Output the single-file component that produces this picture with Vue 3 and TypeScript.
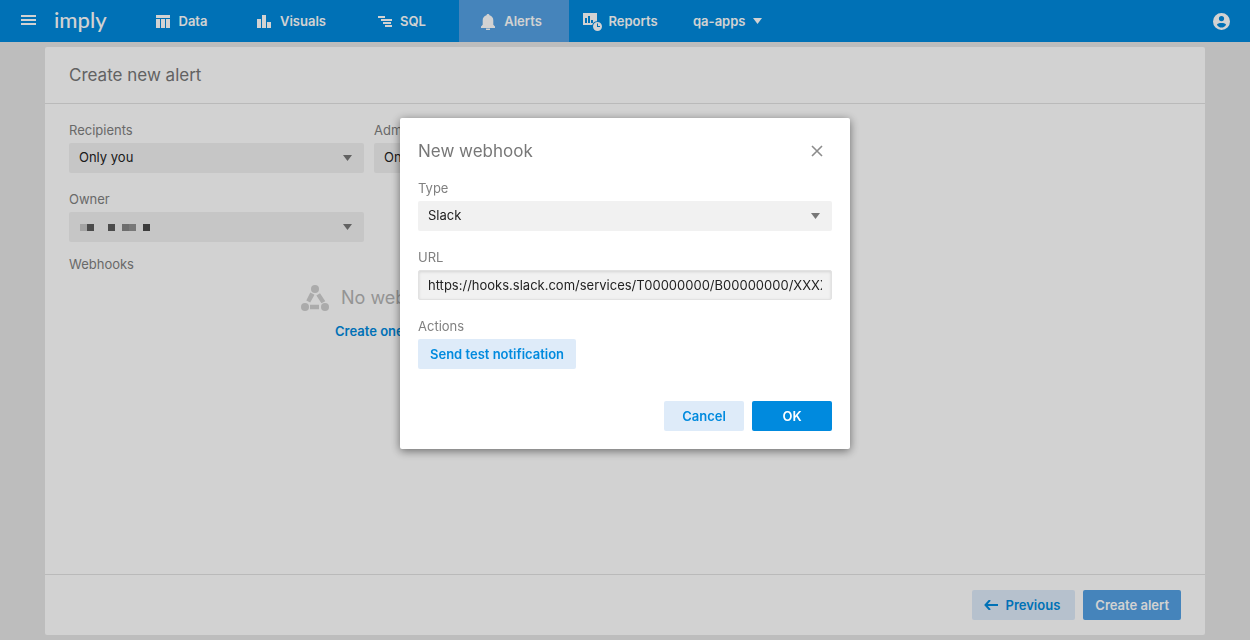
<script setup lang="ts">
import { ref } from 'vue'

interface NavItem {
  label: string
  icon: string
}

const navItems: NavItem[] = [
  { label: 'Data', icon: 'data' },
  { label: 'Visuals', icon: 'visuals' },
  { label: 'SQL', icon: 'sql' },
  { label: 'Alerts', icon: 'alerts' },
  { label: 'Reports', icon: 'reports' },
]
const active = ref('Alerts')
const dialogOpen = ref(true)
const recipients = ref('Only you')
const admins = ref('Only you')
const owner = ref('')
const hookType = ref('Slack')
const url = ref('https://hooks.slack.com/services/T00000000/B00000000/XXXXXXXXXXXXXXXXXXXXXXXX')
</script>

<template>
  <div class="page">
    <header class="topbar">
      <button class="menu" type="button" aria-label="Menu">
        <svg width="15" height="10" viewBox="0 0 15 10"><path d="M0 0h15v2H0zM0 4h15v2H0zM0 8h15v2H0z" /></svg>
      </button>
      <a class="logo" href="#">imply</a>
      <nav class="nav">
        <a
          v-for="item in navItems"
          :key="item.label"
          href="#"
          class="nav-item"
          :class="{ active: item.label === active }"
          @click.prevent="active = item.label"
        >
          <svg class="nav-icon" width="20" height="20" viewBox="0 0 20 20">
            <path v-if="item.icon === 'data'" d="M3 4h14v3H3zM3 8h4v9H3zM8 8h4v9H8zM13 8h4v9h-4z" />
            <path v-else-if="item.icon === 'visuals'" d="M3 8h4v9H3zM8 4h4v13H8zM13 11h4v6h-4z" />
            <path v-else-if="item.icon === 'sql'" d="M4 5h7v2H4zM7 8h11v2H7zM9 11h8v2H9zM11 14h7v2h-7z" />
            <path
              v-else-if="item.icon === 'alerts'"
              d="M10 3c.9 0 1.500.6 1.500 1.300C14 5 15.300 7 15.300 9.300v4.500L17 15.500V17H3v-1.500l1.700-1.700V9.300C4.700 7 6 5 8.500 4.300 8.500 3.600 9.100 3 10 3zM8 17.600h4V19H8z"
            />
            <g v-else>
              <path fill-rule="evenodd" d="M1 2h14v8.200A5 5 0 0 0 10.200 14H1zM3 7v5h2V7zM6 5v7h2V5zM9 9v3h2V9z" />
              <path fill-rule="evenodd" d="M15.500 11a4.500 4.500 0 1 1 0 9 4.500 4.500 0 0 1 0-9zM15 12.500v3.500h3v-1h-2v-2.500z" />
            </g>
          </svg>
          <span>{{ item.label }}</span>
        </a>
        <button class="app-picker" type="button">
          qa-apps
          <svg width="9" height="6" viewBox="0 0 9 6"><path d="M0 0h9L4.500 6z" /></svg>
        </button>
      </nav>
      <button class="account" type="button" aria-label="Account">
        <svg width="17" height="17" viewBox="0 0 17 17">
          <path
            fill-rule="evenodd"
            d="M8.500 0a8.500 8.500 0 1 1 0 17 8.500 8.500 0 0 1 0-17zM8.500 3a2.600 2.600 0 1 0 0 5.200 2.600 2.600 0 0 0 0-5.200zM8.500 10C6.200 10 4 10.600 4 11.800 4.900 13.700 6.500 14.600 8.500 14.600s3.600-.9 4.500-2.800C13 10.600 10.800 10 8.500 10z"
          />
        </svg>
      </button>
    </header>

    <main class="content">
      <section class="panel">
        <h1 class="panel-head">Create new alert</h1>
        <div class="panel-body">
          <div class="fields">
            <div class="field">
              <label for="recipients">Recipients</label>
              <div class="select">
                <select id="recipients" v-model="recipients"><option>Only you</option></select>
                <svg class="caret" width="9" height="6" viewBox="0 0 9 6"><path d="M0 0h9L4.500 6z" /></svg>
              </div>
            </div>
            <div class="field">
              <label for="admins">Admins</label>
              <div class="select">
                <select id="admins" v-model="admins"><option>Only you</option></select>
                <svg class="caret" width="9" height="6" viewBox="0 0 9 6"><path d="M0 0h9L4.500 6z" /></svg>
              </div>
            </div>
            <div class="field">
              <label for="owner">Owner</label>
              <div class="select">
                <select id="owner" v-model="owner"><option value=""></option></select>
                <svg class="redacted" width="70" height="7" viewBox="0 0 70 7">
                  <path fill="#c6c6c6" d="M0 0h7v7H0z" />
                  <path fill="#5c5c5c" d="M7 0h7v7H7zM28 0h7v7h-7z" />
                  <path fill="#868686" d="M42 0h7v7h-7z" />
                  <path fill="#929292" d="M49 0h7v7h-7z" />
                  <path fill="#4a4a4a" d="M63 0h7v7h-7z" />
                </svg>
                <svg class="caret" width="9" height="6" viewBox="0 0 9 6"><path d="M0 0h9L4.500 6z" /></svg>
              </div>
            </div>
          </div>
          <div class="webhooks">
            <h2 class="caption">Webhooks</h2>
            <div class="empty">
              <p class="empty-title">
                <svg width="28" height="26" viewBox="0 0 28 26">
                  <circle cx="14" cy="4" r="4" />
                  <circle cx="4" cy="22" r="4" />
                  <circle cx="24" cy="22" r="4" />
                  <path d="M9.300 7.400 13.500 9.700 9.200 17.600 5.300 15.500zM15.400 10.600 19 8.200 24.300 16.200 20.400 18.300zM9 19.800h9v4.400H9z" />
                </svg>
                No webhooks
              </p>
              <a class="create" href="#">Create one</a>
            </div>
          </div>
        </div>
        <footer class="panel-foot">
          <button class="btn light previous" type="button">
            <svg width="14" height="10" viewBox="0 0 14 10">
              <path d="M6 0 1.500 5 6 10M1.500 5H14" fill="none" stroke="currentColor" stroke-width="2" />
            </svg>
            Previous
          </button>
          <button class="btn muted" type="button">Create alert</button>
        </footer>
      </section>
    </main>

    <div v-if="dialogOpen" class="backdrop">
      <form class="dialog" role="dialog" aria-labelledby="dialog-title" @submit.prevent>
        <div class="dialog-head">
          <h2 id="dialog-title">New webhook</h2>
          <button class="close" type="button" aria-label="Close" @click="dialogOpen = false">
            <svg width="12" height="12" viewBox="0 0 12 12">
              <path d="M1 1l10 10M11 1 1 11" fill="none" stroke="currentColor" stroke-width="1.600" />
            </svg>
          </button>
        </div>
        <div class="field">
          <label for="type">Type</label>
          <div class="select">
            <select id="type" v-model="hookType"><option>Slack</option></select>
            <svg class="caret" width="9" height="6" viewBox="0 0 9 6"><path d="M0 0h9L4.500 6z" /></svg>
          </div>
        </div>
        <div class="field">
          <label for="url">URL</label>
          <input id="url" v-model="url" type="text" spellcheck="false" />
        </div>
        <div class="field">
          <span class="caption">Actions</span>
          <button class="btn light test" type="button">Send test notification</button>
        </div>
        <div class="dialog-foot">
          <button class="btn light wide" type="button" @click="dialogOpen = false">Cancel</button>
          <button class="btn primary wide" type="submit">OK</button>
        </div>
      </form>
    </div>
  </div>
</template>

<style>
body {
  margin: 0;
}
</style>

<style scoped>
* {
  box-sizing: border-box;
}
.page {
  display: flex;
  flex-direction: column;
  min-height: 100vh;
  background: #e6e6e6;
  color: #222;
  font: 400 13px/18px Inter, "Liberation Sans", sans-serif;
}
svg {
  display: block;
  flex: none;
  fill: currentColor;
}
button,
select,
input {
  margin: 0;
  border: 0;
  color: inherit;
  font: inherit;
}
button {
  padding: 0;
  background: none;
  cursor: pointer;
}
a {
  color: inherit;
  text-decoration: none;
}
h1,
h2,
p {
  margin: 0;
  font-weight: 400;
}

.topbar {
  display: flex;
  height: 42px;
  background: #008ade;
  color: #fff;
}
.menu {
  display: flex;
  align-items: center;
  padding: 0 18px 2px 21px;
}
.logo {
  width: 75px;
  font: 500 22px/40px Lato, sans-serif;
}
.nav {
  display: flex;
  flex: 1;
  font-weight: 600;
}
.nav-item {
  display: flex;
  align-items: center;
  justify-content: center;
  gap: 6px;
  width: 110px;
  padding-right: 8px;
}
.nav-item.active {
  background: #54a1e3;
}
.app-picker {
  display: flex;
  align-items: center;
  gap: 8px;
  padding: 0 14px;
}
.account {
  padding: 0 20px;
}

.content {
  display: flex;
  flex: 1;
  padding: 5px 45px;
}
.panel {
  display: flex;
  flex: 1;
  flex-direction: column;
  border-radius: 2px;
  background: #fff;
}
.panel-head {
  padding: 0 24px;
  border-bottom: 1px solid #e2e2e2;
  color: #777;
  font-size: 17px;
  line-height: 56px;
}
.panel-body {
  flex: 1;
  padding: 18px 24px;
}
.panel-foot {
  display: flex;
  justify-content: flex-end;
  gap: 8px;
  padding: 15px 24px;
  border-top: 1px solid #e2e2e2;
}
.fields {
  display: grid;
  grid-template-columns: 295px 295px;
  gap: 18px 10px;
}
.field {
  display: flex;
  flex-direction: column;
  align-items: flex-start;
  gap: 5px;
}
.field label,
.caption {
  color: #808080;
  font-size: 13px;
  line-height: 16px;
}
.select {
  position: relative;
  width: 100%;
}
.select select,
input {
  display: block;
  width: 100%;
  height: 30px;
  padding: 0 10px;
  border-radius: 2px;
  outline: 0;
  background: #f1f1f1;
  appearance: none;
}
.select select {
  padding-bottom: 2px;
}
input {
  border: 1px solid #e2e2e2;
  padding: 0 9px;
  box-shadow: inset 0 1px 3px rgba(0, 0, 0, 0.12);
}
.caret {
  position: absolute;
  top: 12px;
  right: 12px;
  color: #777;
  pointer-events: none;
}
.redacted {
  position: absolute;
  top: 12px;
  left: 11px;
  pointer-events: none;
}
.webhooks {
  margin-top: 14px;
}
.empty {
  display: flex;
  flex-direction: column;
  gap: 11px;
  padding: 13px 0 0 232px;
}
.empty-title {
  display: flex;
  align-items: center;
  gap: 12px;
  color: #b4b4b4;
  font-size: 18px;
  line-height: 26px;
}
.empty-title svg {
  color: #d0d0d0;
}
.create {
  margin-left: 34px;
  color: #008ade;
  font-weight: 600;
}

.btn {
  display: flex;
  align-items: center;
  justify-content: center;
  height: 30px;
  padding: 0 12px;
  border-radius: 2px;
  font-weight: 600;
}
.light {
  background: #deebf9;
  color: #008ade;
}
.muted {
  background: #54a1e3;
  color: #fff;
}
.primary {
  background: #008ade;
  color: #fff;
}
.wide {
  width: 80px;
}
.previous {
  gap: 8px;
  padding-right: 15px;
}

.backdrop {
  position: fixed;
  inset: 0;
  display: flex;
  align-items: flex-start;
  justify-content: center;
  padding-top: 118px;
  background: rgba(0, 0, 0, 0.175);
}
.dialog {
  display: flex;
  flex-direction: column;
  gap: 18px;
  width: 450px;
  padding: 18px;
  border-radius: 2px;
  background: #fff;
  box-shadow: 0 2px 10px rgba(0, 0, 0, 0.5);
}
.dialog-head {
  display: flex;
  align-items: center;
  justify-content: space-between;
  margin-bottom: -4px;
}
.dialog-head h2 {
  color: #777;
  font-size: 17px;
  line-height: 30px;
}
.close {
  padding: 8px 9px;
  color: #8c8c8c;
}
.dialog-foot {
  display: flex;
  justify-content: flex-end;
  gap: 8px;
  padding-top: 14px;
}
</style>
